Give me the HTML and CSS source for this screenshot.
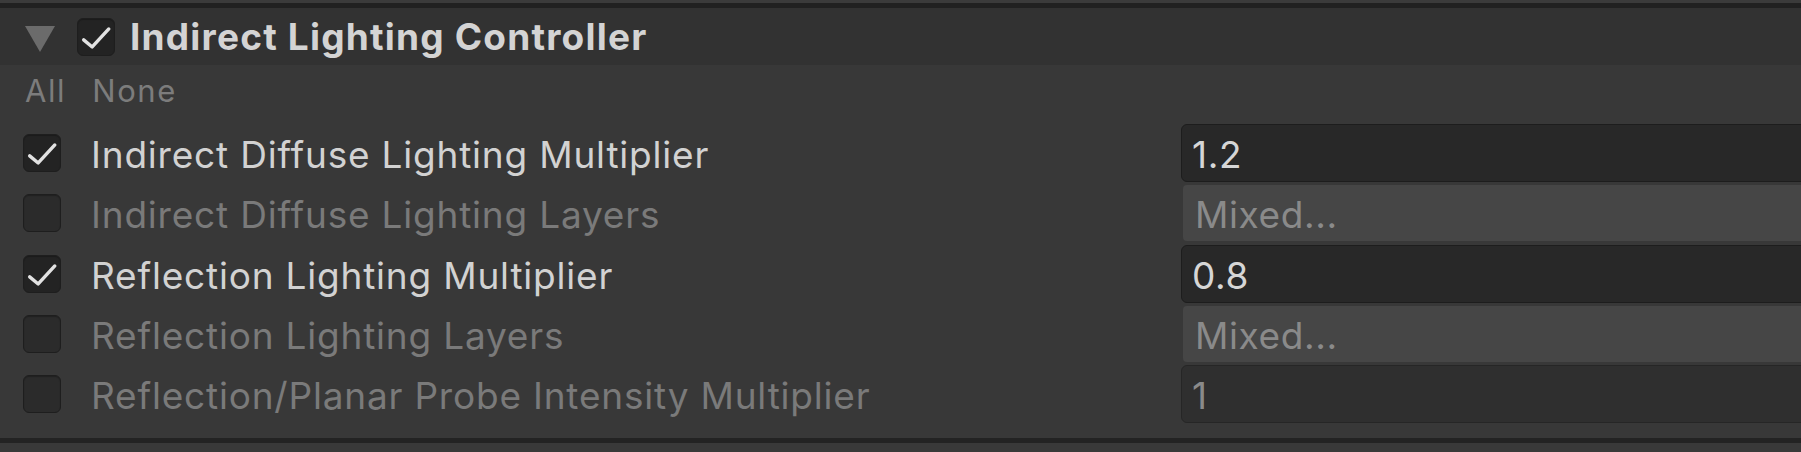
FILE: index.html
```html
<!DOCTYPE html>
<html>
<head>
<meta charset="utf-8">
<link rel="stylesheet" href="styles.css">
</head>
<body>
<div class="inspector">
  <div class="top-strip"></div>
  <div class="component-header">
    <span class="foldout"></span>
    <span class="checkbox checked">
      <svg viewBox="0 0 38 38"><polyline points="6,22 15,29.5 32.5,10.5"/></svg>
    </span>
    <span class="title">Indirect Lighting Controller</span>
  </div>
  <div class="component-body">
    <div class="toggle-links">
      <span class="link">All</span>
      <span class="link">None</span>
    </div>
    <div class="prop">
      <div class="prop-label">
        <span class="checkbox checked">
          <svg viewBox="0 0 38 38"><polyline points="6,22 15,29.5 32.5,10.5"/></svg>
        </span>
        <span class="label-text">Indirect Diffuse Lighting Multiplier</span>
      </div>
      <div class="field">1.2</div>
    </div>
    <div class="prop disabled">
      <div class="prop-label">
        <span class="checkbox"></span>
        <span class="label-text">Indirect Diffuse Lighting Layers</span>
      </div>
      <div class="field mixed">Mixed...</div>
    </div>
    <div class="prop">
      <div class="prop-label">
        <span class="checkbox checked">
          <svg viewBox="0 0 38 38"><polyline points="6,22 15,29.5 32.5,10.5"/></svg>
        </span>
        <span class="label-text">Reflection Lighting Multiplier</span>
      </div>
      <div class="field">0.8</div>
    </div>
    <div class="prop disabled">
      <div class="prop-label">
        <span class="checkbox"></span>
        <span class="label-text">Reflection Lighting Layers</span>
      </div>
      <div class="field mixed">Mixed...</div>
    </div>
    <div class="prop disabled">
      <div class="prop-label">
        <span class="checkbox"></span>
        <span class="label-text">Reflection/Planar Probe Intensity Multiplier</span>
      </div>
      <div class="field">1</div>
    </div>
  </div>
  <div class="separator"></div>
  <div class="next-header"></div>
</div>
</body>
</html>
```

FILE: styles.css
```css
html, body {
  margin: 0;
  padding: 0;
  background: #383838;
  overflow: hidden;
}

.inspector {
  width: 1801px;
  height: 452px;
  display: flex;
  flex-direction: column;
  font-family: Inter, "Noto Sans", sans-serif;
  overflow: hidden;
}

.top-strip {
  height: 3px;
  background: #3b3b3b;
  border-bottom: 5px solid #212121;
}

/* component header row */
.component-header {
  height: 57px;
  background: #323232;
  display: flex;
  align-items: center;
  padding-left: 25px;
  box-sizing: border-box;
}

.foldout {
  width: 0;
  height: 0;
  border-left: 15px solid transparent;
  border-right: 15px solid transparent;
  border-top: 26px solid #6b6b6b;
  margin-right: 22px;
  margin-top: 4px;
}

.checkbox {
  width: 38px;
  height: 38px;
  box-sizing: border-box;
  border-radius: 6px;
  background: #2b2b2b;
  border: 1px solid #1e1e1e;
  box-shadow: inset 0 1px 1px rgba(0, 0, 0, 0.25);
  flex: none;
  display: block;
}

.checkbox.checked {
  background: #232323;
}

.checkbox svg {
  display: block;
  width: 36px;
  height: 36px;
}

.checkbox polyline {
  fill: none;
  stroke: #e2e2e2;
  stroke-width: 3.6;
  stroke-linecap: round;
  stroke-linejoin: round;
}

.title {
  margin-left: 15px;
  font-size: 37px;
  letter-spacing: 1.2px;
  font-weight: 700;
  color: #d4d4d4;
  white-space: nowrap;
}

/* component contents */
.component-body {
  flex: 1;
  background: #383838;
  display: flex;
  flex-direction: column;
}

.toggle-links {
  height: 59px;
  display: flex;
  align-items: center;
  padding-left: 25px;
  gap: 26px;
  font-size: 31px;
  letter-spacing: 1.6px;
  color: #7c7c7c;
  padding-bottom: 8px;
  box-sizing: border-box;
}

.prop {
  height: 58px;
  margin-bottom: 2.3px;
  display: flex;
  align-items: center;
}

.prop-label {
  width: 1181px;
  display: flex;
  align-items: center;
  padding-left: 23px;
  box-sizing: border-box;
  flex: none;
}

.label-text {
  margin-left: 30px;
  padding-top: 3px;
  font-size: 37px;
  letter-spacing: 0.8px;
  color: #d2d2d2;
  white-space: nowrap;
}

.prop.disabled .label-text {
  color: #7a7a7a;
}

.field {
  flex: none;
  width: 640px;
  height: 58px;
  box-sizing: border-box;
  background: #282828;
  border: 1px solid #1d1d1d;
  border-radius: 6px;
  display: flex;
  align-items: center;
  padding-left: 10px;
  padding-top: 3px;
  font-size: 37px;
  letter-spacing: 0.6px;
  color: #d6d6d6;
}

.prop.disabled .field {
  background: #2f2f2f;
  border-color: #262626;
  color: #8a8a8a;
}

.prop.disabled .field.mixed {
  background: #464646;
  border: none;
  height: 56px;
  margin-left: 2px;
  padding-left: 12px;
  border-radius: 4px;
}

.separator {
  height: 5px;
  background: #232323;
  margin-top: -1px;
}

.next-header {
  height: 9px;
  background: #393939;
}
```
